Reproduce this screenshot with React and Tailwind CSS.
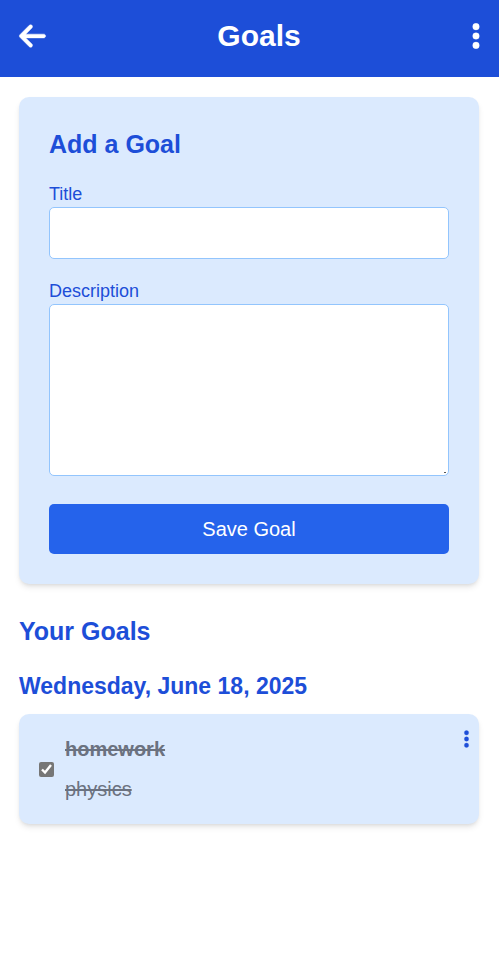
import React from "react";
import { FaArrowLeft, FaEllipsisVertical } from "react-icons/fa6";

function Header() {
  return (
    <header className="flex h-[77px] items-center justify-between bg-[#1d4ed8] px-[19px] pb-1.5 text-white">
      <button type="button" aria-label="Back">
        <FaArrowLeft className="block h-[30px] w-[27px] overflow-visible stroke-current [stroke-width:8]" />
      </button>
      <h1 className="text-[30px] leading-9 font-bold">Goals</h1>
      <button type="button" aria-label="Menu">
        <FaEllipsisVertical className="block h-[30px] w-2 overflow-visible stroke-current [stroke-width:6]" />
      </button>
    </header>
  );
}

function GoalForm() {
  return (
    <form
      className="flex flex-col rounded-[10px] bg-[#dbeafe] p-[30px] shadow-md"
      onSubmit={(e) => e.preventDefault()}
    >
      <h2 className="mb-5 text-[25px] leading-[35px] font-bold text-[#1d4ed8]">Add a Goal</h2>
      <label htmlFor="title" className="text-[18px] leading-[25px] text-[#1d4ed8]">
        Title
      </label>
      <input
        id="title"
        type="text"
        className="h-[52px] w-full rounded-[5px] border border-[#93c5fd] bg-white px-2.5 text-[20px]"
      />
      <label htmlFor="description" className="mt-5 text-[18px] leading-[25px] text-[#1d4ed8]">
        Description
      </label>
      <textarea
        id="description"
        className="h-[172px] w-full rounded-[5px] border border-[#93c5fd] bg-white p-2.5 text-[20px] [&::-webkit-resizer]:bg-[linear-gradient(#555,#555)] [&::-webkit-resizer]:bg-[length:2px_1px] [&::-webkit-resizer]:bg-[position:right_2px_bottom_2px] [&::-webkit-resizer]:bg-no-repeat"
      />
      <button
        type="submit"
        className="mt-7 h-[50px] w-full rounded-[5px] bg-[#2563eb] text-[20px] leading-[30px] text-white"
      >
        Save Goal
      </button>
    </form>
  );
}

function GoalItem({ id, title, description }) {
  return (
    <li className="flex items-start justify-between rounded-[10px] bg-[#dbeafe] py-[15px] pr-2.5 pl-5 shadow-md">
      <div className="flex items-center gap-[11px]">
        <input
          id={id}
          type="checkbox"
          defaultChecked
          className="m-0 h-[15px] w-[15px] accent-[#767676]"
        />
        <label htmlFor={id} className="flex flex-col text-[20px] leading-10 text-[#6b7280] line-through">
          <span className="font-bold">{title}</span>
          <span>{description}</span>
        </label>
      </div>
      <button type="button" aria-label="Goal options">
        <FaEllipsisVertical className="block h-5 w-[5px] overflow-visible stroke-current text-[#1d4ed8] [stroke-width:8]" />
      </button>
    </li>
  );
}

export default function App() {
  return (
    <div className="min-h-screen bg-white font-['Liberation_Sans',Arial,sans-serif]">
      <Header />
      <main className="pt-5 pr-5 pb-5 pl-[19px]">
        <GoalForm />
        <section>
          <h2 className="mt-[30px] text-[25px] leading-[35px] font-bold text-[#1d4ed8]">Your Goals</h2>
          <h3 className="mt-5 mb-2.5 text-[23px] leading-[35px] font-bold text-[#1d4ed8]">
            Wednesday, June 18, 2025
          </h3>
          <ul>
            <GoalItem id="goal-1" title="homework" description="physics" />
          </ul>
        </section>
      </main>
    </div>
  );
}
